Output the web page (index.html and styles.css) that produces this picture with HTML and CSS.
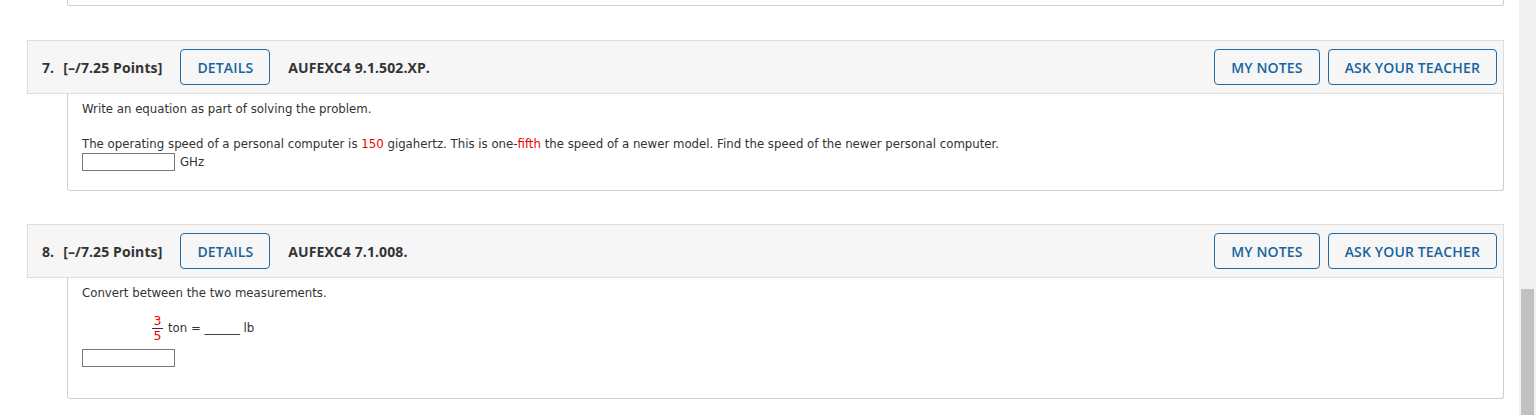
FILE: index.html
```html
<!DOCTYPE html>
<html>
<head>
<meta charset="utf-8">
<link rel="stylesheet" href="styles.css">
</head>
<body>
<div class="page">
  <div class="prev-body"></div>

  <div class="question q7">
    <div class="q-header">
      <span class="q-num">7.</span>
      <span class="q-points">[–/7.25 Points]</span>
      <button class="btn btn-details">DETAILS</button>
      <span class="q-code">AUFEXC4 9.1.502.XP.</span>
      <span class="spacer"></span>
      <button class="btn">MY NOTES</button>
      <button class="btn">ASK YOUR TEACHER</button>
    </div>
    <div class="q-body">
      <p class="line first">Write an equation as part of solving the problem.</p>
      <p class="line second">The operating speed of a personal computer is <span class="red">150</span> gigahertz. This is one-<span class="red">fifth</span> the speed of a newer model. Find the speed of the newer personal computer.</p>
      <div class="answer-row"><span class="answer-box"></span><span class="unit">GHz</span></div>
    </div>
  </div>

  <div class="question q8">
    <div class="q-header">
      <span class="q-num">8.</span>
      <span class="q-points">[–/7.25 Points]</span>
      <button class="btn btn-details">DETAILS</button>
      <span class="q-code">AUFEXC4 7.1.008.</span>
      <span class="spacer"></span>
      <button class="btn">MY NOTES</button>
      <button class="btn">ASK YOUR TEACHER</button>
    </div>
    <div class="q-body q8-body">
      <p class="line first">Convert between the two measurements.</p>
      <div class="equation">
        <span class="frac"><span class="num red">3</span><span class="den red">5</span></span>
        <span class="eq-text">ton = ______ lb</span>
      </div>
      <div class="answer-row2"><span class="answer-box"></span></div>
    </div>
  </div>
</div>
<div class="scrollbar"><div class="thumb"></div></div>
</body>
</html>
```
FILE: styles.css
```css
html, body {
  margin: 0;
  padding: 0;
  background: #ffffff;
  overflow: hidden;
}

.page {
  margin-left: 27px;
  width: 1477px;
}

.prev-body {
  margin-left: 40px;
  height: 5px;
  border: 1px solid #cfcfcf;
  border-top: none;
  border-radius: 0 0 3px 3px;
}

.question {
  margin-top: 34px;
}

.q8 {
  margin-top: 33px;
}

.q-header {
  display: flex;
  align-items: center;
  height: 36px;
  padding: 8px 6px 8px 14px;
  background: #f6f6f6;
  border: 1px solid #dddddd;
  font-family: "Open Sans", sans-serif;
  font-size: 14px;
  font-weight: 700;
  letter-spacing: 0.1px;
  color: #333333;
}

.q-num {
  margin-right: 9px;
}

.q-points {
  margin-right: 18px;
}

.q-code {
  margin-left: 18px;
}

.spacer {
  flex: 1;
}

.btn {
  height: 36px;
  padding: 0 16px;
  background: transparent;
  border: 1px solid #1f6aa5;
  border-radius: 4px;
  color: #17649e;
  font-family: "Open Sans", sans-serif;
  font-size: 14px;
  font-weight: 600;
  letter-spacing: 0.15px;
  margin-left: 8px;
}

.btn-details {
  margin-left: 0;
}

.q-body {
  margin-left: 40px;
  border: 1px solid #cfcfcf;
  border-top: none;
  border-radius: 0 0 3px 3px;
  padding: 7px 14px 19px 14px;
  font-family: "DejaVu Sans", Verdana, sans-serif;
  font-size: 11.75px;
  color: #333333;
}

.line {
  margin: 0;
  line-height: 16px;
}

.line.second {
  margin-top: 19px;
}

.red {
  color: #ee0000;
}

.answer-row {
  display: flex;
  align-items: center;
  height: 18px;
  margin-top: 1px;
}

.answer-box {
  display: inline-block;
  width: 91px;
  height: 16px;
  border: 1px solid #7a7a7a;
  background: #ffffff;
}

.unit {
  margin-left: 5px;
}

.q8-body {
  padding-bottom: 31px;
}

.equation {
  display: flex;
  align-items: center;
  margin-top: 12px;
  padding-left: 70px;
  height: 30px;
}

.frac {
  display: inline-flex;
  flex-direction: column;
  align-items: center;
  width: 11px;
  font-size: 12.5px;
  line-height: 14px;
  margin-right: 5px;
}

.frac .num {
  border-bottom: 1px solid #333333;
  width: 100%;
  text-align: center;
}

.frac .den {
  text-align: center;
}

.eq-text {
  line-height: 16px;
}

.answer-row2 {
  margin-top: 6px;
  height: 18px;
}

.scrollbar {
  position: fixed;
  top: 0;
  right: 0;
  width: 17px;
  height: 100%;
  background: #f1f1f1;
}

.thumb {
  position: absolute;
  top: 289px;
  left: 2px;
  width: 13px;
  height: 200px;
  background: #c1c1c1;
}
```
